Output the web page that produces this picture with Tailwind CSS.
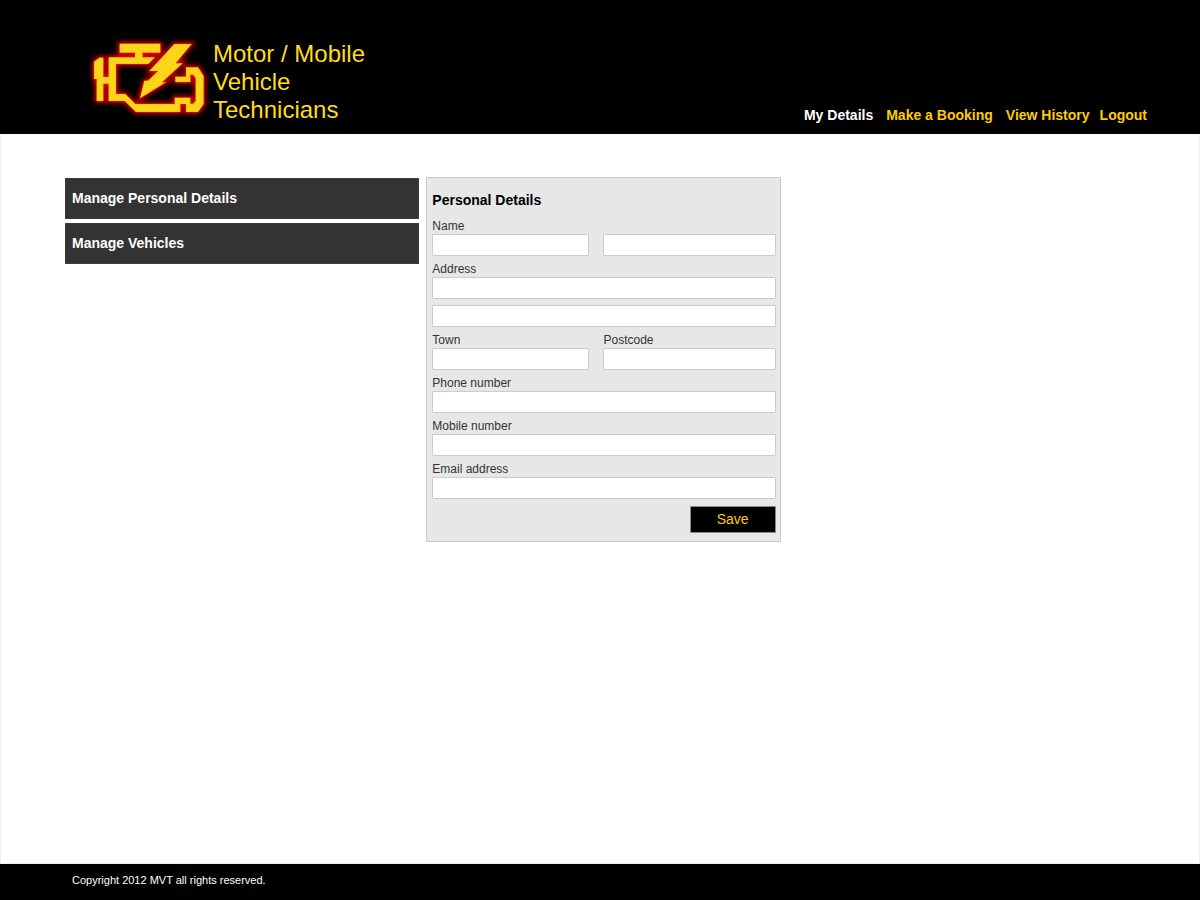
<!DOCTYPE html>
<html lang="en">
<head>
<meta charset="utf-8">
<meta name="viewport" content="width=device-width, initial-scale=1">
<title>MVT - My Details</title>
<script src="https://cdn.jsdelivr.net/npm/@tailwindcss/browser@4"></script>
</head>
<body class="flex min-h-screen flex-col bg-white font-['Liberation_Sans',Arial,sans-serif] text-sm text-[#333]">
  <header class="flex flex-wrap items-end justify-between bg-black pr-[53px] pl-20">
    <a href="#" class="flex items-start pt-[30px] pb-1">
      <svg class="h-[100px] w-[133px] shrink-0 overflow-visible" viewBox="0 0 399 300" aria-hidden="true">
        <defs>
          <filter id="glow" x="-20%" y="-20%" width="140%" height="140%">
            <feGaussianBlur stdDeviation="7"/>
          </filter>
          <g id="engine">
            <path d="M119 41H241V68H188V82H225L205 102H108V192H136L166 222H284V203H331V221H340L347 212V144L339 134H331V156H286V140H318V112H354L371 138V222L354 246H318V222H301V246H168L134 213H86V161H70V213H50V147H42V95L58 83H70V141H86V82H165V68H119Z"/>
            <path d="M283 42H335L287 100H308L246 157H258L180 205L193 152H204L234 123H208Z"/>
          </g>
        </defs>
        <use href="#engine" fill="#d80000" stroke="#d80000" stroke-width="12" filter="url(#glow)"/>
        <use href="#engine" fill="#ffd51c" stroke="#f07800" stroke-width="1"/>
      </svg>
      <span class="pt-[10px] font-['Liberation_Sans_Narrow','Liberation_Sans',sans-serif] text-2xl leading-7 text-[#ffdc1c]"><span class="block">Motor / Mobile</span><span class="block">Vehicle</span><span class="block">Technicians</span></span>
    </a>
    <nav class="flex gap-[10px] pb-[9px] leading-5 font-bold text-[#fc0]">
      <div class="flex gap-[13px]">
        <a href="#" class="text-white" aria-current="page">My Details</a>
        <a href="#">Make a Booking</a>
        <a href="#">View History</a>
      </div>
      <a href="#">Logout</a>
    </nav>
  </header>

  <main class="grid flex-1 grid-cols-3 items-start gap-[7px] border-x border-b border-[#eee] pt-[43px] pr-[57px] pb-8 pl-16">
    <nav class="flex flex-col gap-1 pt-px font-bold text-white">
      <a href="#" class="border border-[#3c3c3c] bg-[#333] px-[6px] py-[9px] leading-[21px]">Manage Personal Details</a>
      <a href="#" class="border border-[#3c3c3c] bg-[#333] px-[6px] py-[9px] leading-[21px]">Manage Vehicles</a>
    </nav>

    <form class="flex flex-col gap-[6px] border border-[#ccc] bg-[#e7e7e7] pt-3 pr-1 pb-2 pl-[5px]">
      <h1 class="pb-[2px] leading-[21px] font-bold text-black">Personal Details</h1>
      <div class="grid grid-cols-[157fr_172fr] gap-x-[14px] text-xs leading-[15px]">
        <label for="first">Name</label>
        <input id="first" type="text" class="col-start-1 h-[22px] w-full min-w-0 rounded-[1px] border border-[#ccc] bg-white px-1">
        <input type="text" aria-label="Last name" class="h-[22px] w-full min-w-0 rounded-[1px] border border-[#ccc] bg-white px-1">
      </div>
      <div class="flex flex-col text-xs leading-[15px]">
        <label for="address">Address</label>
        <input id="address" type="text" class="h-[22px] rounded-[1px] border border-[#ccc] bg-white px-1">
      </div>
      <input type="text" aria-label="Address line 2" class="h-[22px] rounded-[1px] border border-[#ccc] bg-white px-1 text-xs">
      <div class="grid grid-cols-[157fr_172fr] gap-x-[14px] text-xs leading-[15px]">
        <label for="town">Town</label>
        <label for="postcode">Postcode</label>
        <input id="town" type="text" class="h-[22px] w-full min-w-0 rounded-[1px] border border-[#ccc] bg-white px-1">
        <input id="postcode" type="text" class="h-[22px] w-full min-w-0 rounded-[1px] border border-[#ccc] bg-white px-1">
      </div>
      <div class="flex flex-col text-xs leading-[15px]">
        <label for="phone">Phone number</label>
        <input id="phone" type="tel" class="h-[22px] rounded-[1px] border border-[#ccc] bg-white px-1">
      </div>
      <div class="flex flex-col text-xs leading-[15px]">
        <label for="mobile">Mobile number</label>
        <input id="mobile" type="tel" class="h-[22px] rounded-[1px] border border-[#ccc] bg-white px-1">
      </div>
      <div class="flex flex-col text-xs leading-[15px]">
        <label for="email">Email address</label>
        <input id="email" type="email" class="h-[22px] rounded-[1px] border border-[#ccc] bg-white px-1">
      </div>
      <button type="button" class="mt-px h-[27px] w-[86px] self-end rounded-[1px] border border-[#888] bg-black pb-[2px] text-[#fc0]">Save</button>
    </form>
  </main>

  <footer class="bg-black px-[72px] pt-2 pb-3 text-[11px] leading-4 text-white">Copyright 2012 MVT all rights reserved.</footer>
</body>
</html>
